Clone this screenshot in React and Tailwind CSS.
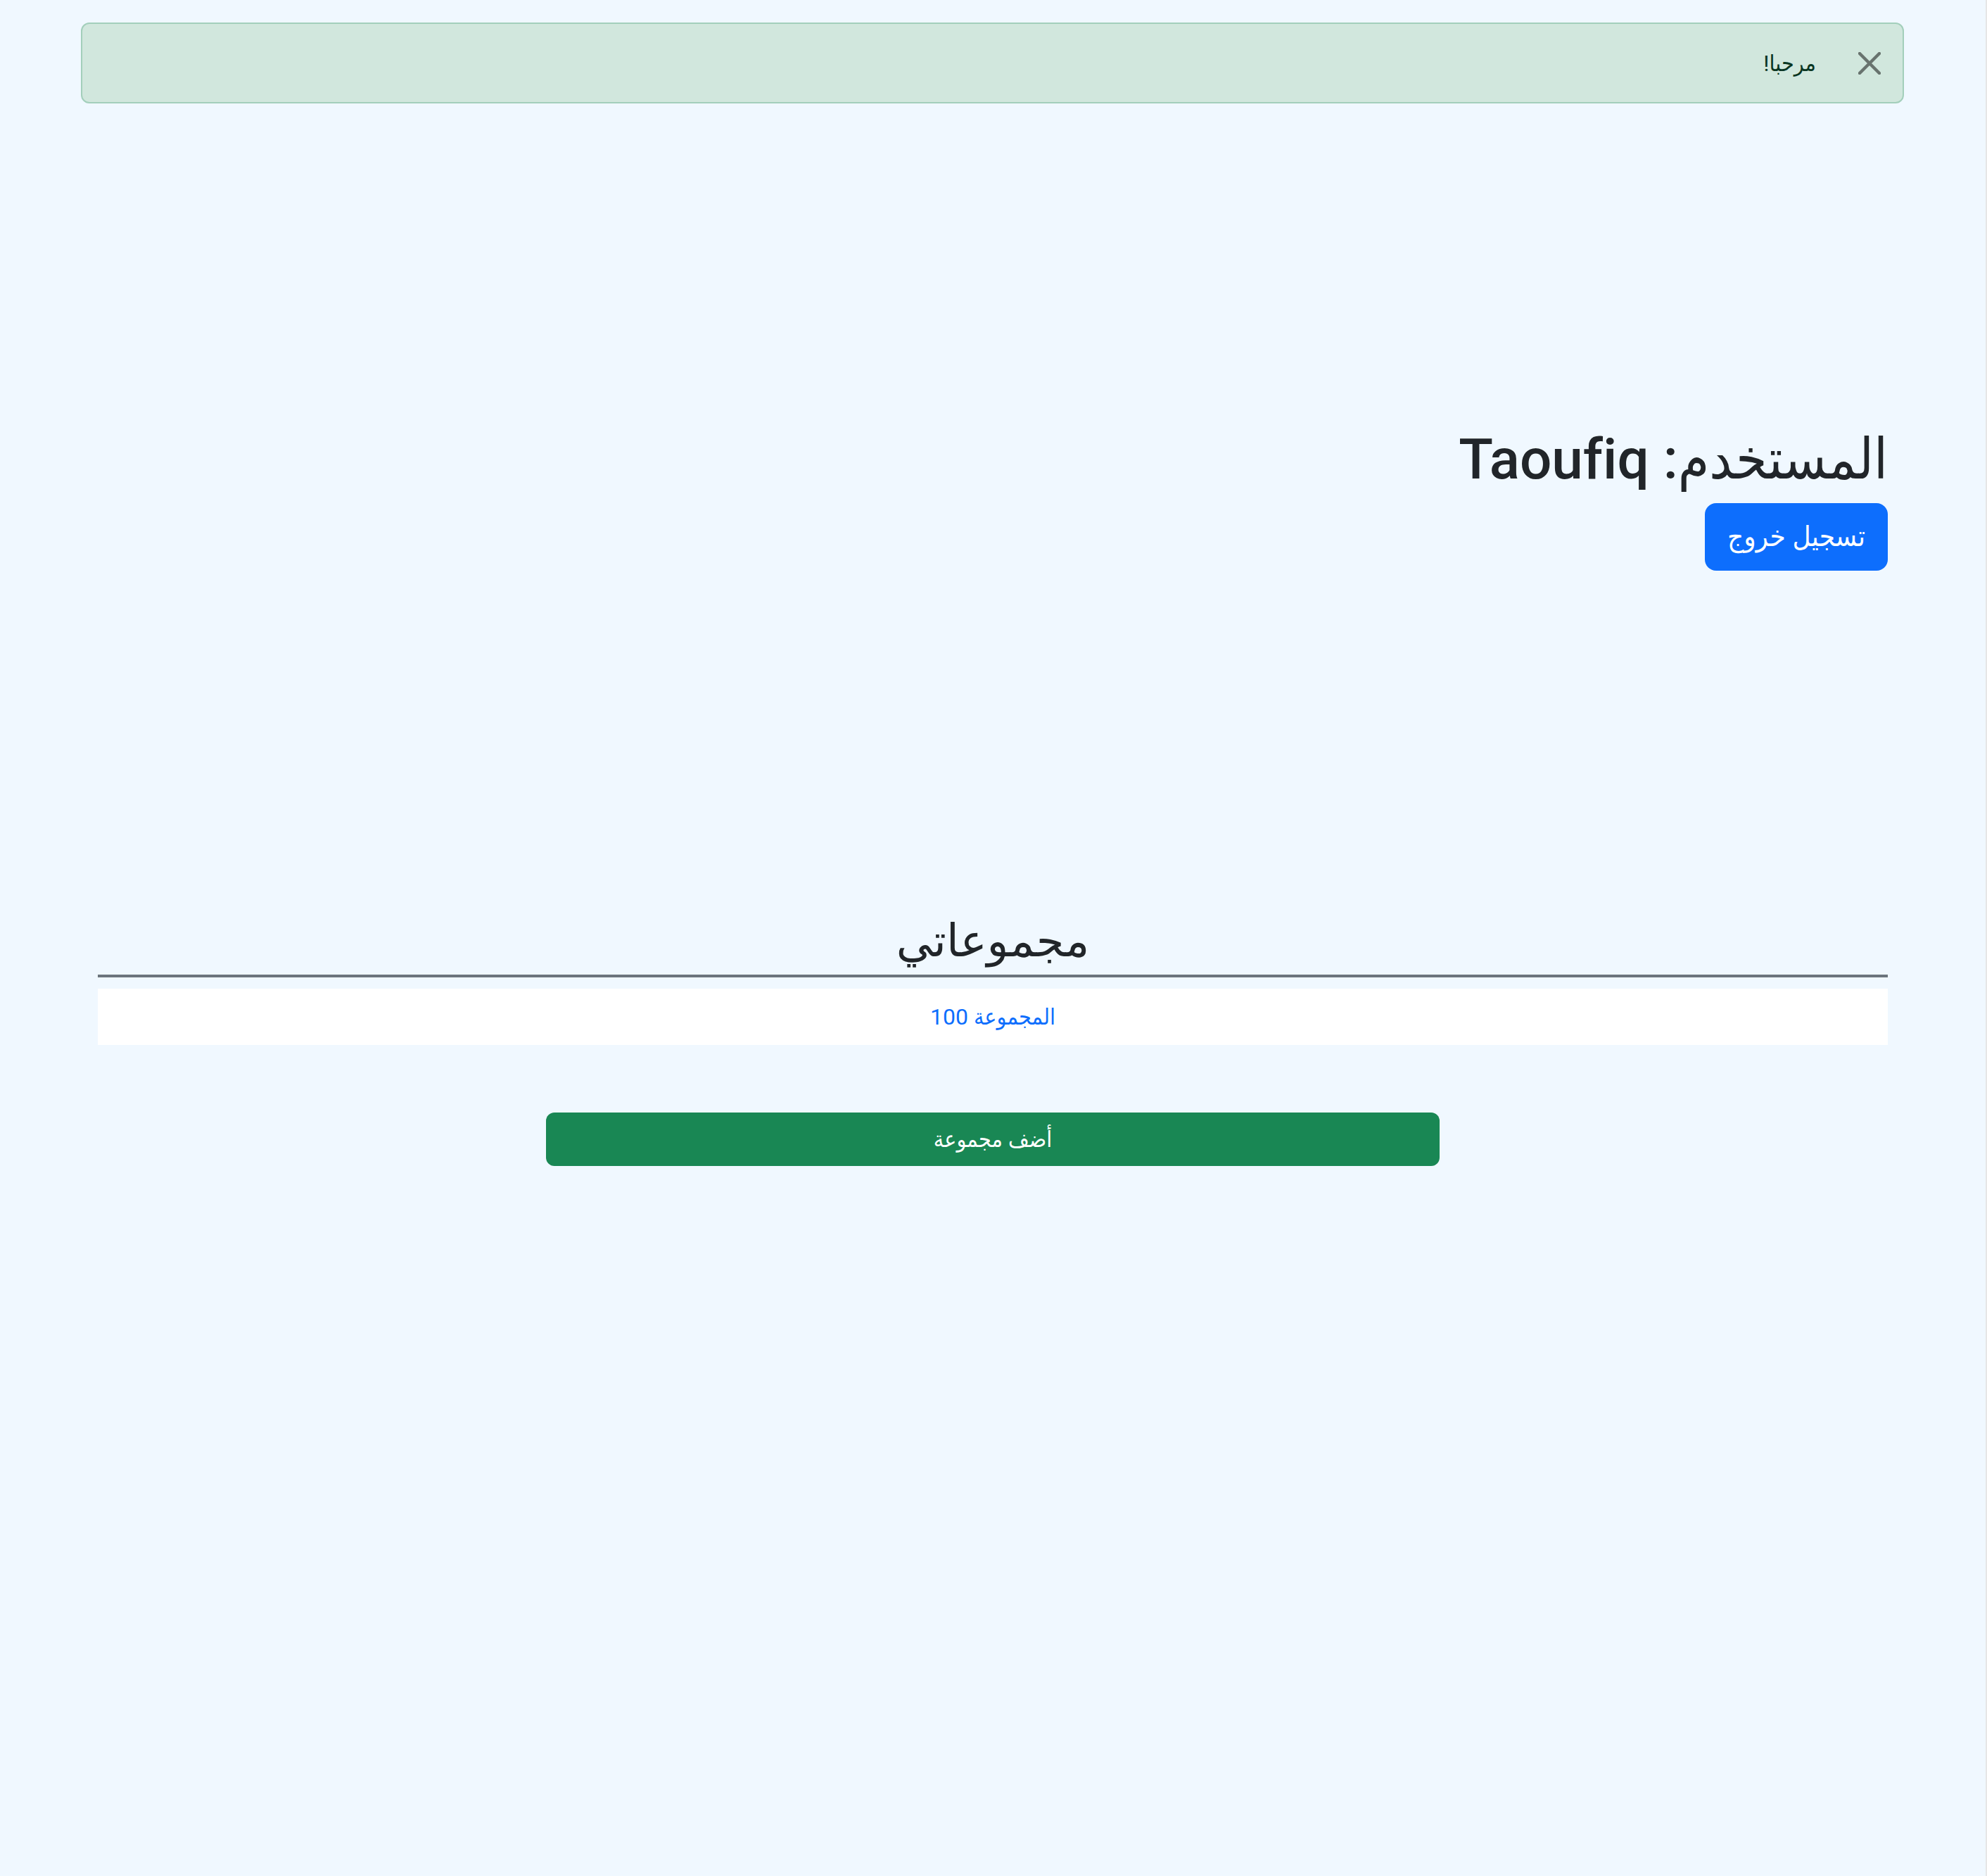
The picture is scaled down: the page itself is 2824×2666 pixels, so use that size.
import React from 'react';

const font = "font-['Roboto','DejaVu_Sans_Condensed','DejaVu_Sans',sans-serif]";

function CloseIcon() {
  return (
    <svg width="32" height="32" viewBox="0 0 32 32" className="block">
      <path d="M2 2 L30 30 M30 2 L2 30" stroke="#000" strokeOpacity="0.5" strokeWidth="4.5" strokeLinecap="round" />
    </svg>
  );
}

export default function App() {
  return (
    <div className={`flex min-h-screen bg-[#f0f8ff] ${font}`}>
      <div className="flex-1">
        {/* welcome alert */}
        <div className="ml-[115px] mt-[32px] flex h-[115px] w-[2591px] items-center justify-end gap-[60px] rounded-[12px] border-2 border-[#a3cfbb] bg-[#d1e7dd] pr-[31px] text-[#0a3622]">
          <span dir="rtl" className="text-[32px] leading-[48px]">مرحبا!</span>
          <CloseIcon />
        </div>

        <div className="ml-[139px] w-[2544px]">
          {/* user */}
          <div dir="rtl" className="mt-[458px]">
            <h1 className="text-[80px] leading-[96px] font-medium text-[#212529]">
              المستخدم: <span className="[font-variant-ligatures:none]">Taoufiq</span>
            </h1>
            <div className="mt-[14px] flex">
              <button className="h-[96px] rounded-[16px] bg-[#0d6efd] px-[32px] text-[40px] leading-[60px] text-white">
                تسجيل خروج
              </button>
            </div>
          </div>

          {/* groups */}
          <div className="mt-[488px]">
            <h2 dir="rtl" className="pb-[9px] text-center font-['Roboto','DejaVu_Sans',sans-serif] text-[64px] leading-[77px] font-medium text-[#212529]">
              مجموعاتي
            </h2>
            <div className="h-[4px] bg-[#6c757d]" />
            <div className="mt-[16px] flex h-[80px] items-center justify-center bg-white">
              <span dir="rtl" className="text-[32px] leading-[48px] text-[#0d6efd]">المجموعة 100</span>
            </div>
            <div className="mt-[96px] flex justify-center">
              <button dir="rtl" className="h-[76px] w-[1270px] rounded-[12px] bg-[#198754] text-[32px] leading-[48px] text-white">
                أضف مجموعة
              </button>
            </div>
          </div>
        </div>
      </div>
      <div className="w-[2px] bg-[#e6e6e6]" />
    </div>
  );
}
